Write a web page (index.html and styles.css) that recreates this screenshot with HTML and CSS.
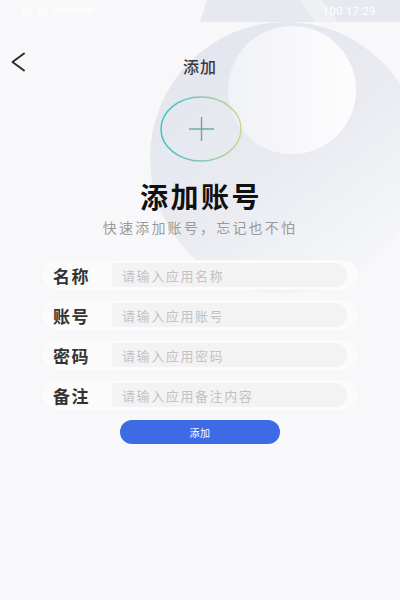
FILE: index.html
```html
<!DOCTYPE html>
<html lang="zh-CN">
<head>
<meta charset="utf-8">
<title>添加账号</title>
<link rel="stylesheet" href="styles.css">
</head>
<body>
<svg class="deco" width="400" height="600" viewBox="0 0 400 600" aria-hidden="true">
  <defs>
    <linearGradient id="bigG" x1="0.1" y1="0" x2="0.85" y2="1">
      <stop offset="0" stop-color="#e3e5ee"/>
      <stop offset="0.5" stop-color="#e9ebf1"/>
      <stop offset="0.85" stop-color="#f4f5f8"/>
      <stop offset="1" stop-color="#f8f8fa"/>
    </linearGradient>
    <linearGradient id="innerG" x1="0" y1="0" x2="1" y2="0">
      <stop offset="0" stop-color="#f1f2f7"/>
      <stop offset="1" stop-color="#fdfdfe"/>
    </linearGradient>
  </defs>
  <polygon points="207,0 400,0 400,22 200,22" fill="#e7e9f0"/>
  <polygon points="300,0 322,0 338,22 316,22" fill="#eff0f4"/>
  <circle cx="286" cy="158" r="136" fill="url(#bigG)"/>
  <circle cx="292" cy="90" r="64" fill="url(#innerG)"/>
</svg>

<div class="app">
  <div class="statusbar">
    <div class="sb-left">
      <span class="sb-dot"></span><span class="sb-dot"></span><span class="sb-bar"></span>
    </div>
    <div class="sb-right">100 17:29</div>
  </div>

  <div class="nav">
    <svg class="back" width="20" height="24" viewBox="0 0 20 24" aria-hidden="true">
      <polyline points="14,3.5 2.5,12 14,20.5" fill="none" stroke="#2b2b2b" stroke-width="2" stroke-linecap="round" stroke-linejoin="round"/>
    </svg>
    <div class="nav-title">添加</div>
    <div class="nav-spacer"></div>
  </div>

  <div class="hero">
    <svg class="plus" width="84" height="68" viewBox="0 0 84 68" aria-hidden="true">
      <defs>
        <linearGradient id="ringG" x1="0" y1="0" x2="1" y2="0">
          <stop offset="0" stop-color="#35c2c6"/>
          <stop offset="0.5" stop-color="#86c6b0"/>
          <stop offset="1" stop-color="#cfd38e"/>
        </linearGradient>
      </defs>
      <ellipse cx="42" cy="34" rx="40" ry="32" fill="none" stroke="url(#ringG)" stroke-width="1.4"/>
      <line x1="30" y1="34" x2="55" y2="34" stroke="#6aa79d" stroke-width="1.4"/>
      <line x1="42.5" y1="22" x2="42.5" y2="46" stroke="#6aa79d" stroke-width="1.4"/>
    </svg>
    <h1 class="title">添加账号</h1>
    <p class="subtitle">快速添加账号，忘记也不怕</p>
  </div>

  <form class="form">
    <div class="row">
      <span class="label">名称</span>
      <div class="input">请输入应用名称</div>
    </div>
    <div class="row">
      <span class="label">账号</span>
      <div class="input">请输入应用账号</div>
    </div>
    <div class="row">
      <span class="label">密码</span>
      <div class="input">请输入应用密码</div>
    </div>
    <div class="row">
      <span class="label">备注</span>
      <div class="input">请输入应用备注内容</div>
    </div>
    <div class="btn">添加</div>
  </form>
</div>
</body>
</html>
```

FILE: styles.css
```css
html, body {
  margin: 0;
  padding: 0;
}
body {
  width: 400px;
  height: 600px;
  position: relative;
  overflow: hidden;
  background: #f8f8fa;
  font-family: "Noto Sans CJK SC", "Noto Sans", sans-serif;
  color: #333;
}
.deco {
  position: absolute;
  left: 0;
  top: 0;
  z-index: 0;
}
.app {
  position: relative;
  z-index: 1;
}
.statusbar {
  height: 22px;
  display: flex;
  align-items: center;
  justify-content: space-between;
  padding: 0 24px 0 22px;
}
.sb-left {
  display: flex;
  align-items: center;
  gap: 6px;
  opacity: 0.45;
}
.sb-dot {
  width: 10px;
  height: 7px;
  background: #ffffff;
  border-radius: 1px;
}
.sb-bar {
  width: 40px;
  height: 6px;
  background: #ffffff;
  border-radius: 1px;
}
.sb-right {
  font-family: "Roboto", "Noto Sans", sans-serif;
  font-size: 11px;
  color: #ffffff;
  letter-spacing: 0.5px;
}
.nav {
  margin-top: 22px;
  height: 44px;
  display: grid;
  grid-template-columns: 40px 1fr 40px;
  align-items: center;
}
.back {
  margin-left: 10px;
  margin-top: -9px;
}
.nav-title {
  text-align: center;
  font-size: 16px;
  font-weight: 500;
  color: #3a3a3a;
  letter-spacing: 1px;
}
.hero {
  display: flex;
  flex-direction: column;
  align-items: center;
}
.plus {
  margin-top: 7px;
  margin-left: 2px;
}
.title {
  margin: 17px 0 0;
  font-size: 28px;
  line-height: 32px;
  font-weight: 700;
  color: #111;
  letter-spacing: 2.5px;
  padding-left: 2px;
}
.subtitle {
  margin: 5px 0 0;
  font-size: 14px;
  line-height: 20px;
  color: #9a9a9a;
  letter-spacing: 2.2px;
}
.form {
  margin: 23px 0 0;
  display: flex;
  flex-direction: column;
  align-items: center;
  gap: 10px;
}
.row {
  width: 316px;
  height: 30px;
  box-sizing: border-box;
  display: flex;
  align-items: center;
  background: #fbfbfc;
  border-radius: 15px;
  box-shadow: 0 0 2px rgba(0, 0, 0, 0.035);
  padding: 0 11px;
}
.label {
  width: 59px;
  font-size: 17px;
  font-weight: 700;
  color: #333;
  letter-spacing: 1.5px;
}
.input {
  flex: 1;
  height: 24px;
  display: flex;
  align-items: center;
  background: #f3f3f4;
  border-radius: 4px 12px 12px 4px;
  padding-left: 10px;
  font-size: 13px;
  color: #c2c2c4;
  letter-spacing: 1.6px;
}
.btn {
  width: 160px;
  height: 24px;
  border-radius: 12px;
  background: #3d6be6;
  color: #fff;
  font-size: 10px;
  display: flex;
  align-items: center;
  justify-content: center;
  letter-spacing: 0.5px;
}
```
